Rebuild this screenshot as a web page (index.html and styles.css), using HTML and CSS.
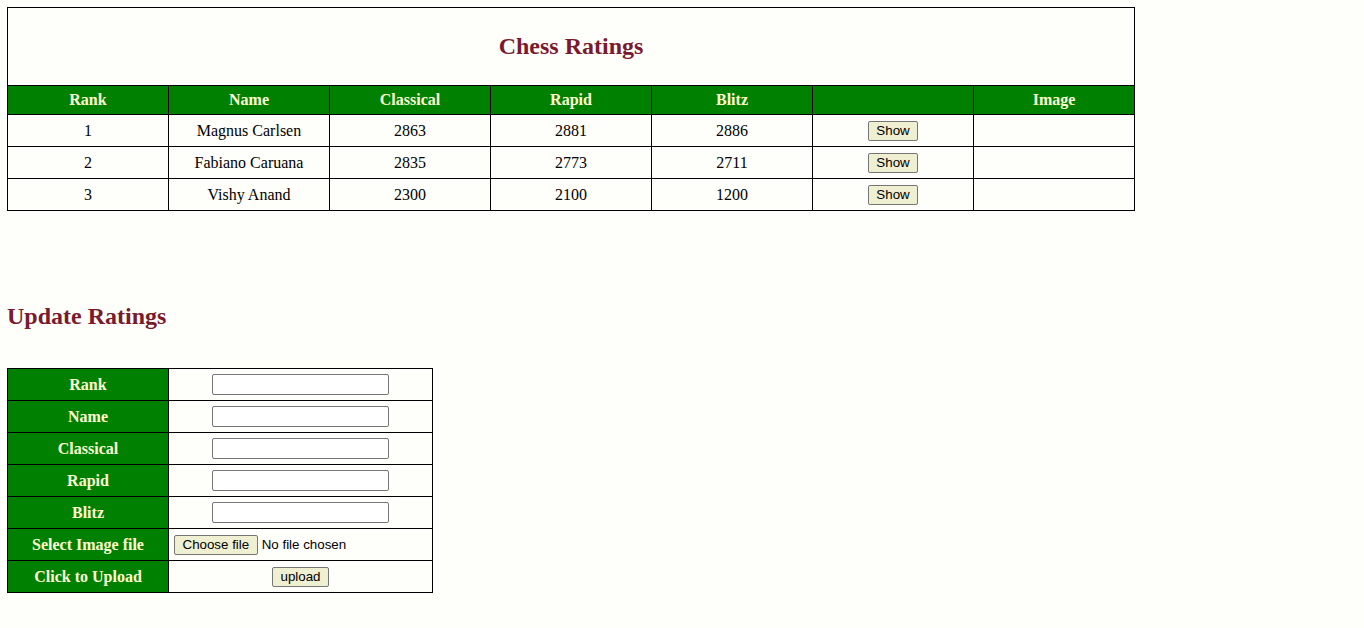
FILE: index.html
```html
<!DOCTYPE html>
<html>
<head>
<meta charset="utf-8">
<title>Chess Ratings</title>
<link rel="stylesheet" href="styles.css">
</head>
<body>
<table class="ratings">
  <tr class="title-row"><th colspan="7"><h2 class="title">Chess Ratings</h2></th></tr>
  <tr class="head-row">
    <th>Rank</th><th>Name</th><th>Classical</th><th>Rapid</th><th>Blitz</th><th></th><th>Image</th>
  </tr>
  <tr class="data-row"><td>1</td><td>Magnus Carlsen</td><td>2863</td><td>2881</td><td>2886</td><td><button class="btn">Show</button></td><td></td></tr>
  <tr class="data-row"><td>2</td><td>Fabiano Caruana</td><td>2835</td><td>2773</td><td>2711</td><td><button class="btn">Show</button></td><td></td></tr>
  <tr class="data-row"><td>3</td><td>Vishy Anand</td><td>2300</td><td>2100</td><td>1200</td><td><button class="btn">Show</button></td><td></td></tr>
</table>

<h2 class="section-title">Update Ratings</h2>

<table class="form-table">
  <tr><th>Rank</th><td><input class="field" type="text"></td></tr>
  <tr><th>Name</th><td><input class="field" type="text"></td></tr>
  <tr><th>Classical</th><td><input class="field" type="text"></td></tr>
  <tr><th>Rapid</th><td><input class="field" type="text"></td></tr>
  <tr><th>Blitz</th><td><input class="field" type="text"></td></tr>
  <tr><th>Select Image file</th><td class="file-cell"><button class="btn file-btn">Choose file</button><span class="file-text">No file chosen</span></td></tr>
  <tr><th>Click to Upload</th><td><button class="btn">upload</button></td></tr>
</table>
</body>
</html>
```
FILE: styles.css
```css
html, body {
  background: #fefefa;
}
body {
  margin: 7px;
  font-family: "Liberation Serif", "Times New Roman", serif;
  font-size: 16px;
  color: #000;
}
table {
  border-collapse: collapse;
  border: 1px solid #000;
}
th, td {
  border: 1px solid #000;
  padding: 0;
  text-align: center;
}
.ratings {
  width: 1128px;
  table-layout: fixed;
}
.title-row th {
  height: 77px;
  background: transparent;
}
.title {
  margin: 0 0 2px;
  font-size: 24px;
  font-weight: bold;
  color: #7a1a2e;
  line-height: 28px;
}
.head-row th {
  height: 28px;
  background: #008000;
  color: #ffffd0;
  font-weight: bold;
}
.data-row td {
  height: 31px;
}
.btn {
  font-family: "Liberation Sans", Arial, sans-serif;
  font-size: 13.33px;
  background: #efefd2;
  border: 1px solid #767676;
  border-radius: 2px;
  padding: 1px 7.5px;
  height: 20px;
  line-height: 16px;
  color: #000;
  vertical-align: middle;
}
.section-title {
  margin: 91px 0 38px;
  font-size: 24px;
  font-weight: bold;
  color: #7a1a2e;
  line-height: 28px;
}
.form-table {
  width: 426px;
  table-layout: fixed;
}
.form-table th {
  width: 160px;
  height: 31px;
  background: #008000;
  color: #ffffd0;
  font-weight: bold;
}
.form-table td {
  height: 31px;
}
.field {
  width: 177px;
  height: 21px;
  box-sizing: border-box;
  border: 1px solid #767676;
  border-radius: 2px;
  background: #fff;
  padding: 1px 2px;
  vertical-align: middle;
}
.file-cell {
  text-align: left;
  padding-left: 5px;
}
.file-btn {
  margin-right: 4px;
}
.file-text {
  font-family: "Liberation Sans", Arial, sans-serif;
  font-size: 13.33px;
  vertical-align: middle;
}
```
